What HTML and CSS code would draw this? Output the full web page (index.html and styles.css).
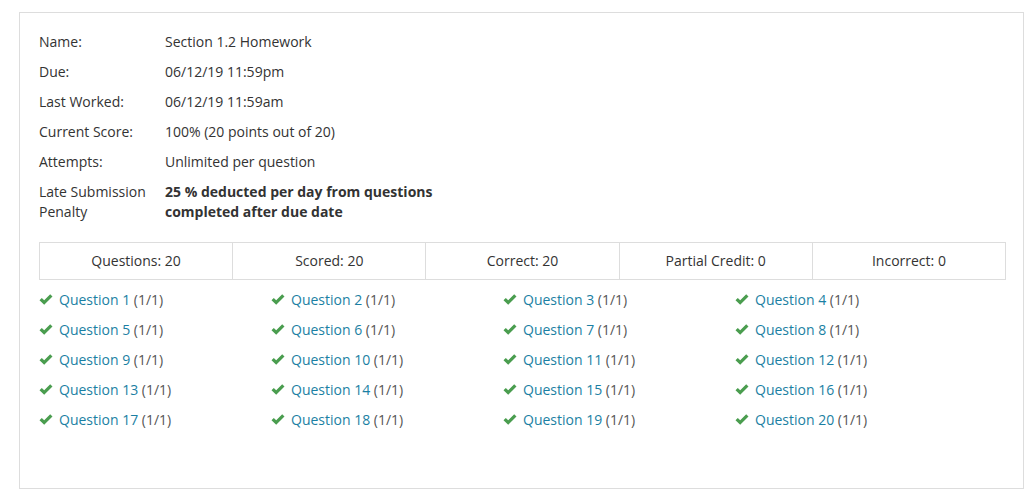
FILE: index.html
```html
<!DOCTYPE html>
<html lang="en">
<head>
  <meta charset="UTF-8" />
  <title>Section 1.2 Homework</title>
  <link rel="stylesheet" href="styles.css">
</head>
<body>
  <div class="card">
    <div class="info">
      <div class="row"><span class="label">Name:</span><span class="value">Section 1.2 Homework</span></div>
      <div class="row"><span class="label">Due:</span><span class="value">06/12/19 11:59pm</span></div>
      <div class="row"><span class="label">Last Worked:</span><span class="value">06/12/19 11:59am</span></div>
      <div class="row"><span class="label">Current Score:</span><span class="value">100% (20 points out of 20)</span></div>
      <div class="row"><span class="label">Attempts:</span><span class="value">Unlimited per question</span></div>
      <div class="row"><span class="label">Late Submission Penalty</span><span class="value bold">25 % deducted per day from questions completed after due date</span></div>
    </div>

    <div class="stats">
      <div class="stat">Questions: 20</div>
      <div class="stat">Scored: 20</div>
      <div class="stat">Correct: 20</div>
      <div class="stat">Partial Credit: 0</div>
      <div class="stat">Incorrect: 0</div>
    </div>

    <div class="questions" id="questions"></div>
  </div>

  <script>
    const list = document.getElementById("questions");
    for (let i = 1; i <= 20; i++) {
      const item = document.createElement("div");
      item.className = "question";
      item.innerHTML =
        '<svg class="check" viewBox="0 0 14 13"><path d="M0.5 7.2 L2.8 4.9 L5.2 7.3 L11.2 1.2 L13.5 3.5 L5.2 11.8 Z"/></svg>' +
        '<a href="#">Question ' + i + '</a> <span class="score">(1/1)</span>';
      list.appendChild(item);
    }
  </script>
</body>
</html>
```

FILE: styles.css
```css
body {
  margin: 0;
  padding: 12px 0 0 19px;
  background: #fff;
  font-family: 'Open Sans', 'Liberation Sans', sans-serif;
  font-size: 14px;
  color: #333;
}

.card {
  width: 967px;
  height: 438px;
  border: 1px solid #ddd;
  padding: 19px 17px 18px 19px;
}

.info .row {
  display: flex;
  line-height: 20px;
  margin-bottom: 10px;
}

.info .label {
  width: 126px;
  flex-shrink: 0;
}

.info .value {
  width: 280px;
}

.info .bold {
  font-weight: bold;
}

.stats {
  display: flex;
  margin-top: 20px;
  border: 1px solid #ddd;
}

.stat {
  flex: 1;
  text-align: center;
  line-height: 36px;
  border-left: 1px solid #ddd;
}

.stat:first-child {
  border-left: none;
}

.questions {
  display: grid;
  grid-template-columns: repeat(4, 232px);
  row-gap: 10px;
  margin-top: 10px;
}

.question {
  line-height: 20px;
  white-space: nowrap;
}

.check {
  width: 14px;
  height: 13px;
  fill: #4a9d4f;
  margin-right: 6px;
  vertical-align: -1px;
}

.question a {
  color: #1b7fa3;
  text-decoration: none;
}

.score {
  color: #555;
}
```
